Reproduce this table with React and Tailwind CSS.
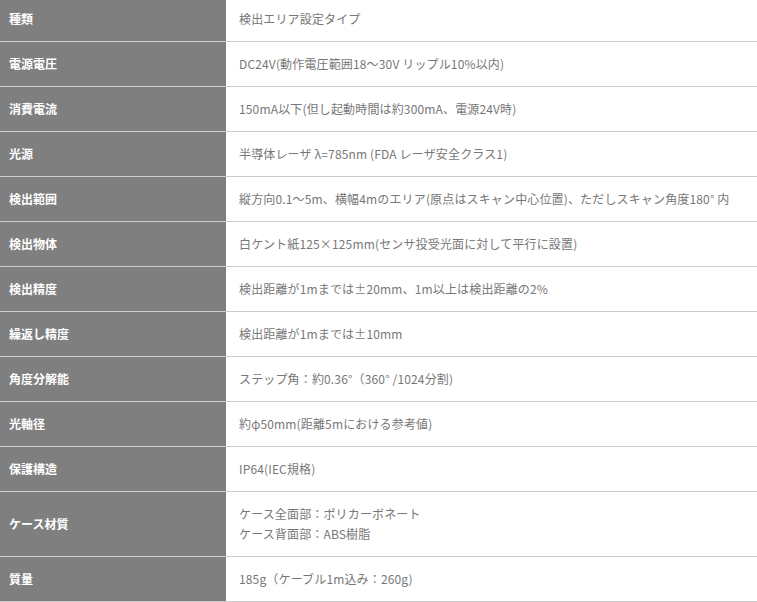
import React from "react";

const rows = [
  ["種類", ["検出エリア設定タイプ"]],
  ["電源電圧", ["DC24V(動作電圧範囲18〜30V リップル10%以内)"]],
  ["消費電流", ["150mA以下(但し起動時間は約300mA、電源24V時)"]],
  ["光源", ["半導体レーザ λ=785nm (FDA レーザ安全クラス1)"]],
  ["検出範囲", ["縦方向0.1〜5m、横幅4mのエリア(原点はスキャン中心位置)、ただしスキャン角度180°  内"]],
  ["検出物体", ["白ケント紙125×125mm(センサ投受光面に対して平行に設置)"]],
  ["検出精度", ["検出距離が1mまでは±20mm、1m以上は検出距離の2%"]],
  ["繰返し精度", ["検出距離が1mまでは±10mm"]],
  ["角度分解能", ["ステップ角：約0.36°（360°  /1024分割)"]],
  ["光軸径", ["約φ50mm(距離5mにおける参考値)"]],
  ["保護構造", ["IP64(IEC規格)"]],
  ["ケース材質", ["ケース全面部：ポリカーボネート", "ケース背面部：ABS樹脂"], true],
  ["質量", ["185g（ケーブル1m込み：260g)"]],
];

export default function App() {
  return (
    <div
      className="w-[757px] h-[602px] overflow-hidden bg-white"
      style={{ fontFamily: '"Noto Sans CJK JP", "Noto Sans", sans-serif' }}
    >
      <div className="-mt-[4px] border-t border-[#cccccc]">
        {rows.map(([label, lines, tall], i) => (
          <div
            key={i}
            className={`flex border-b border-[#cccccc] ${tall ? "h-[65px]" : "h-[45px]"}`}
          >
            <div className="w-[226px] shrink-0 bg-[#7f7f7f] flex items-center pl-[9px] text-white font-bold text-[12px]">
              {label}
            </div>
            <div className="flex-1 flex flex-col justify-center pl-[13px] text-[#777777] text-[12px] leading-[20px] tracking-[0.15px]">
              {lines.map((l, j) => (
                <div key={j}>{l}</div>
              ))}
            </div>
          </div>
        ))}
      </div>
    </div>
  );
}
